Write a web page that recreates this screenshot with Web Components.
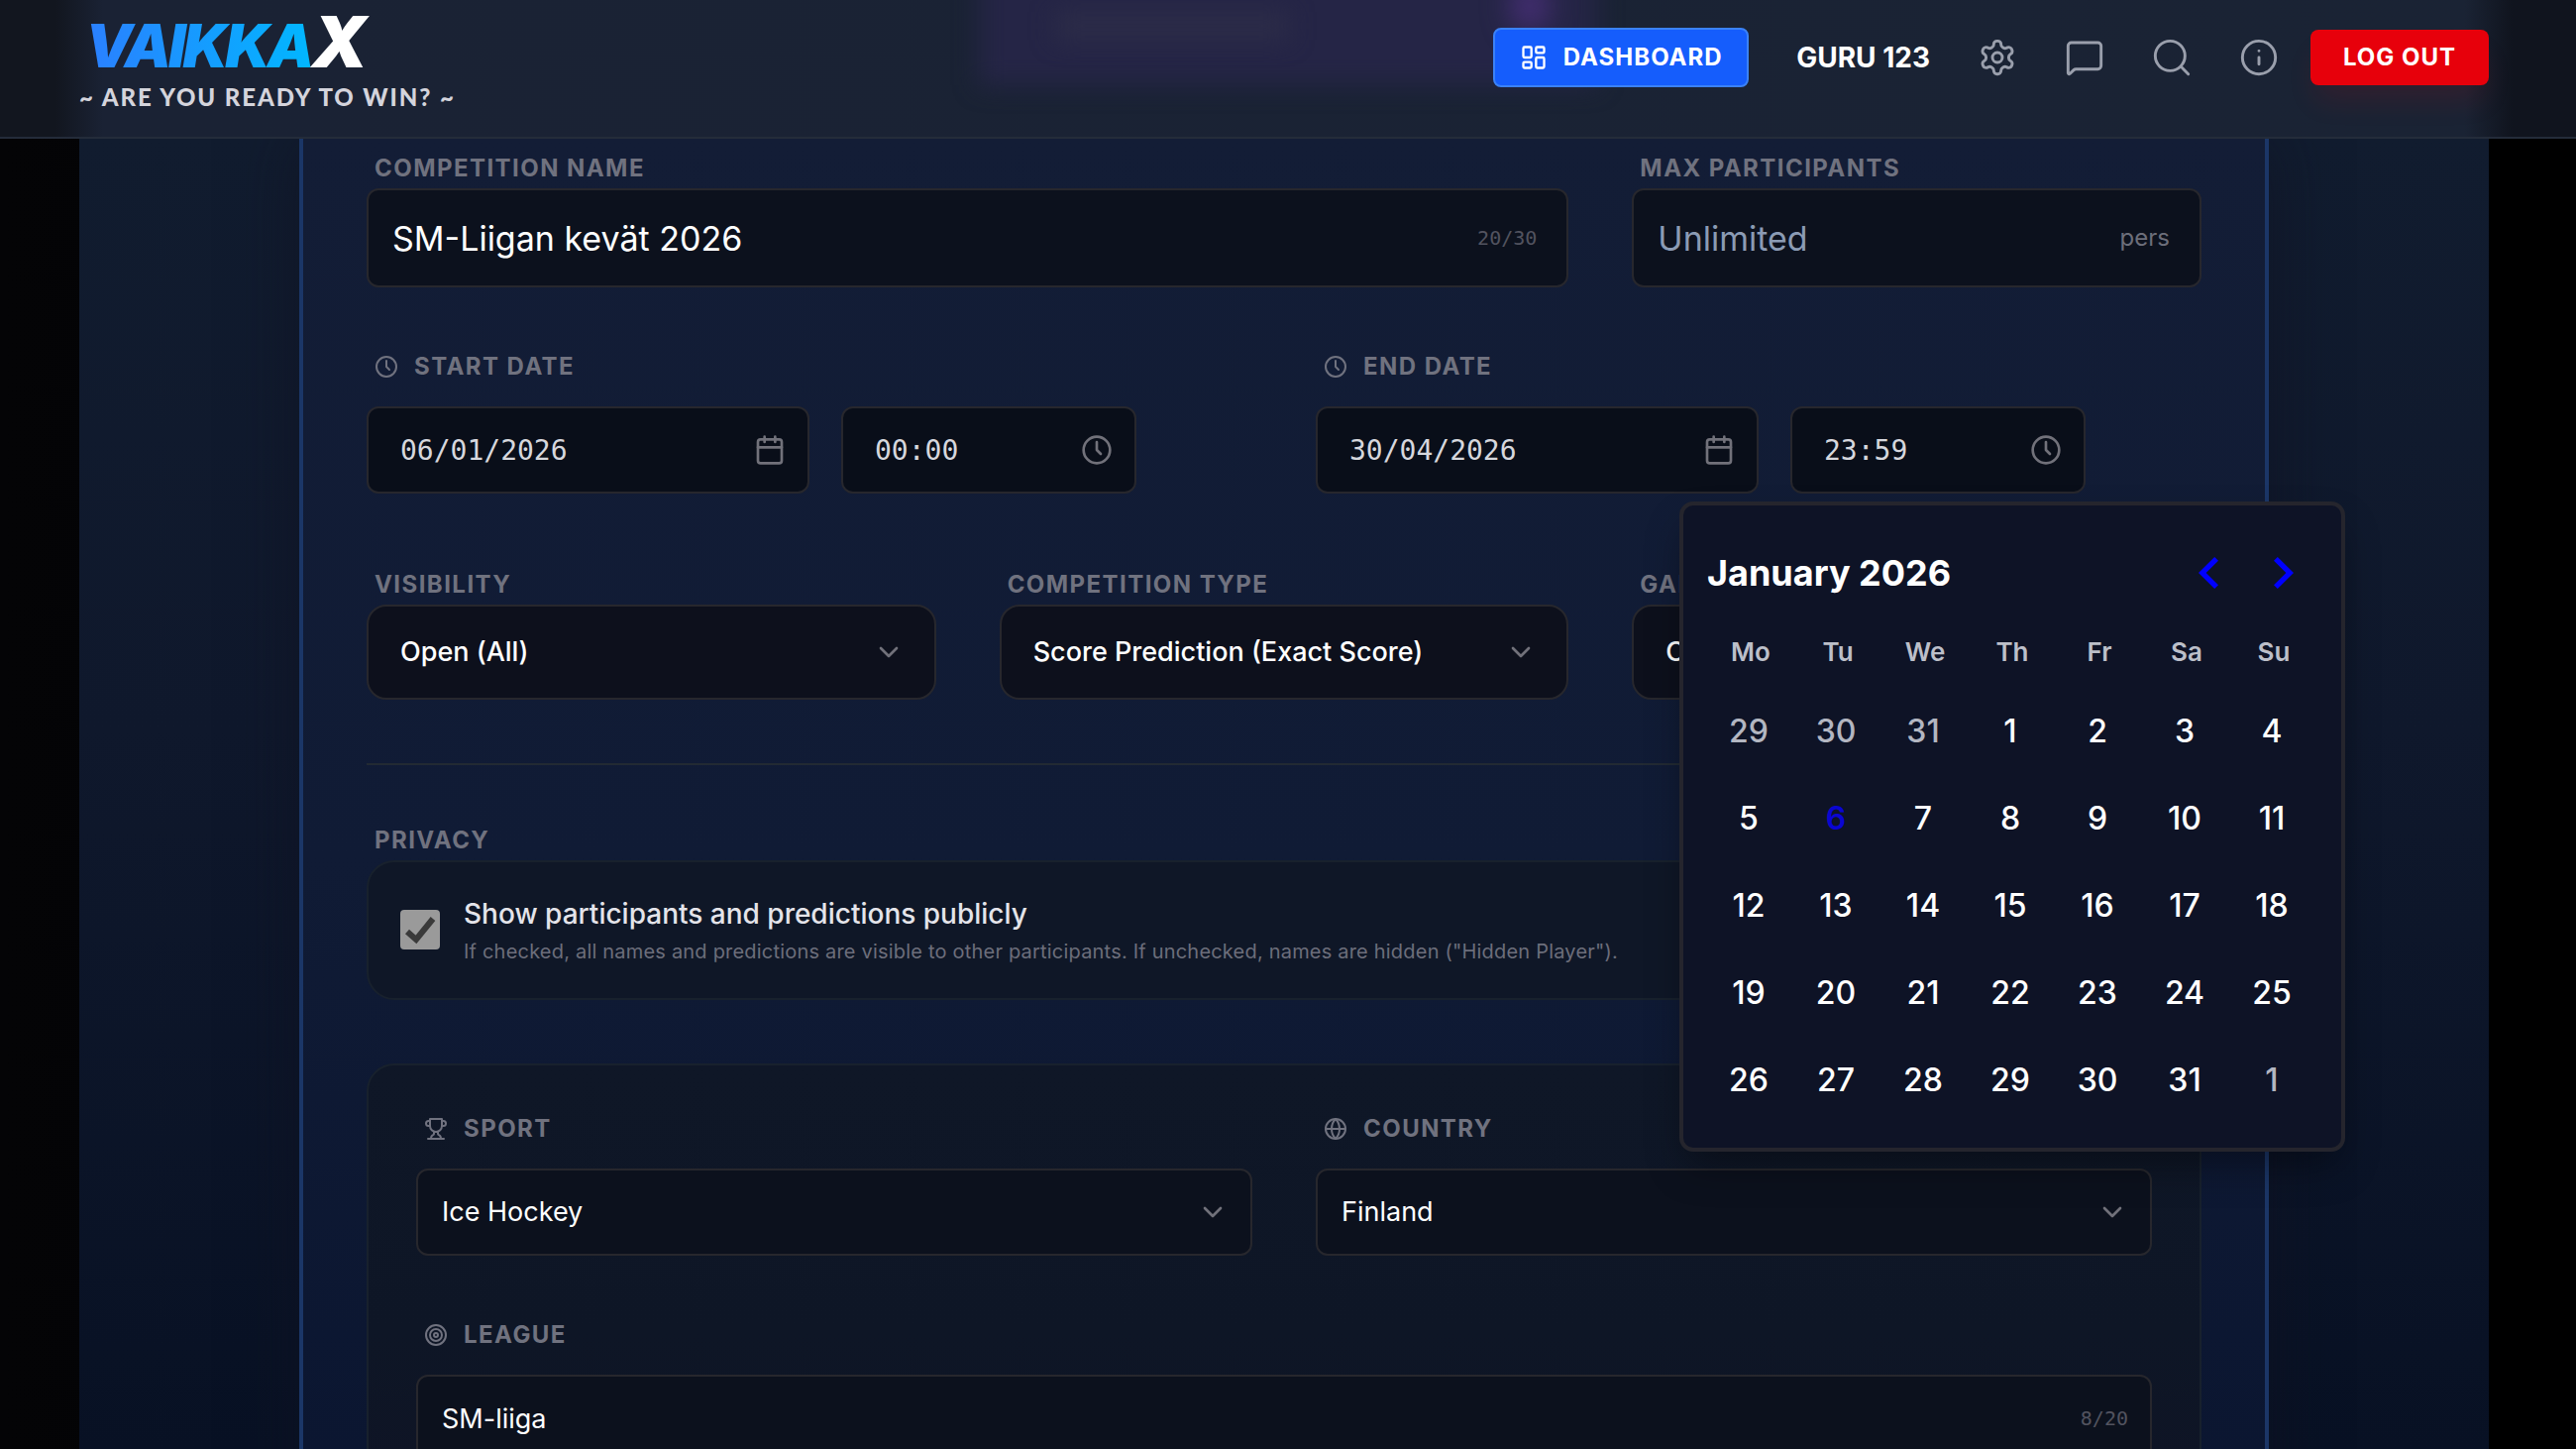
<!DOCTYPE html>
<html lang="en">
<head>
<meta charset="utf-8">
<title>VaikkaX – Create competition</title>
<style>
  html, body { margin: 0; height: 100%; }
  body {
    background: linear-gradient(90deg, #040406, #000 50%);
    color: #fff;
    font-family: Inter, "Liberation Sans", sans-serif;
    overflow: hidden;
    --label: #70727f;
    --line: #27272d;
    --well: #0c111d;
    --mono: "DejaVu Sans Mono", "Liberation Mono", monospace;
  }
</style>
</head>
<body>
<vx-app></vx-app>
<script>
const ICONS = {
  dashboard: '<rect width="7" height="9" x="3" y="3" rx="1"/><rect width="7" height="5" x="14" y="3" rx="1"/><rect width="7" height="9" x="14" y="12" rx="1"/><rect width="7" height="5" x="3" y="16" rx="1"/>',
  settings: '<path d="M12.22 2h-.44a2 2 0 0 0-2 2v.18a2 2 0 0 1-1 1.73l-.43.25a2 2 0 0 1-2 0l-.15-.08a2 2 0 0 0-2.73.73l-.22.38a2 2 0 0 0 .73 2.73l.15.1a2 2 0 0 1 1 1.72v.51a2 2 0 0 1-1 1.74l-.15.09a2 2 0 0 0-.73 2.73l.22.38a2 2 0 0 0 2.73.73l.15-.08a2 2 0 0 1 2 0l.43.25a2 2 0 0 1 1 1.73V20a2 2 0 0 0 2 2h.44a2 2 0 0 0 2-2v-.18a2 2 0 0 1 1-1.73l.43-.25a2 2 0 0 1 2 0l.15.08a2 2 0 0 0 2.73-.73l.22-.39a2 2 0 0 0-.73-2.73l-.15-.08a2 2 0 0 1-1-1.74v-.5a2 2 0 0 1 1-1.74l.15-.09a2 2 0 0 0 .73-2.73l-.22-.38a2 2 0 0 0-2.73-.73l-.15.08a2 2 0 0 1-2 0l-.43-.25a2 2 0 0 1-1-1.73V4a2 2 0 0 0-2-2z"/><circle cx="12" cy="12" r="3"/>',
  message: '<path d="M22 17a2 2 0 0 1-2 2H6.828a2 2 0 0 0-1.414.586l-2.202 2.202A.71.71 0 0 1 2 21.286V5a2 2 0 0 1 2-2h16a2 2 0 0 1 2 2z"/>',
  search: '<circle cx="11" cy="11" r="9"/><path d="m22 22-4.400-4.400"/>',
  info: '<circle cx="12" cy="12" r="10"/><path d="M12 16v-4M12 8h.01"/>',
  clock: '<circle cx="12" cy="12" r="10"/><path d="M12 6v6l3 3"/>',
  calendar: '<path d="M8 2v4M16 2v4M3 10h18"/><rect width="18" height="18" x="3" y="4" rx="2"/>',
  chevron: '<path d="m6 9 6 6 6-6"/>',
  trophy: '<path d="M6 9H4.500a2.500 2.500 0 0 1 0-5H6M18 9h1.500a2.500 2.500 0 0 0 0-5H18M4 22h16M10 14.660V17c0 .55-.47.98-.97 1.210C7.850 18.750 7 20.240 7 22M14 14.660V17c0 .55.47.98.97 1.210C16.150 18.750 17 20.240 17 22M18 2H6v7a6 6 0 0 0 12 0V2Z"/>',
  globe: '<circle cx="12" cy="12" r="10"/><path d="M12 2a14.500 14.500 0 0 0 0 20 14.500 14.500 0 0 0 0-20M2 12h20"/>',
  target: '<circle cx="12" cy="12" r="10"/><circle cx="12" cy="12" r="6"/><circle cx="12" cy="12" r="2"/>'
};

class VxElement extends HTMLElement {
  connectedCallback() {
    if (this.shadowRoot) return;
    this.attachShadow({ mode: 'open' }).innerHTML = this.render();
  }
  a(name, fallback = '') { return this.getAttribute(name) ?? fallback; }
}

customElements.define('vx-icon', class extends VxElement {
  render() {
    const size = this.a('size', '24');
    return `<style>
      :host { display: block; flex: none; width: ${size}px; height: ${size}px; }
      svg { display: block; width: 100%; height: 100%; fill: none; stroke: currentColor; stroke-linecap: round; stroke-linejoin: round; }
    </style>
    <svg viewBox="0 0 24 24" stroke-width="${this.a('stroke', '2')}" aria-hidden="true">${ICONS[this.a('name')]}</svg>`;
  }
});

const FIELD_CSS = `
  :host { display: block; min-width: 0; }
  * { box-sizing: border-box; }
  .label { display: flex; align-items: center; gap: 16px; height: 32px; padding-left: 8px; margin-bottom: 4px;
    color: var(--label); font-size: 24px; line-height: 32px; font-weight: 700; letter-spacing: 0.06em; white-space: nowrap; }
  :host([icon]) .label { margin-bottom: 24px; }
  .well { position: relative; display: flex; align-items: center; }
  input, select { width: 100%; height: 88px; margin: 0; padding: 0 24px; border: 2px solid var(--line); border-radius: 12px;
    background: var(--well); color: #fff; font: 400 27px/40px Inter, sans-serif; outline: none; appearance: none; }
  input::placeholder { color: #8b9bb4; opacity: 1; }
  .adorn { position: absolute; right: 24px; color: #71717a; pointer-events: none; }
  .count { font: 20px/28px var(--mono); color: #52535f; }
  .unit { font-size: 24px; line-height: 32px; color: #6c6e7a; }
`;
const labelOf = el => `<label class="label" for="f">${el.a('icon') ? `<vx-icon name="${el.a('icon')}" stroke="2"></vx-icon>` : ''}${el.a('label')}</label>`;

customElements.define('vx-text-field', class extends VxElement {
  render() {
    return `<style>${FIELD_CSS}
      :host([large]) input { height: 100px; font-size: 34px; }
      :host([large]) .adorn { right: 32px; }
    </style>
    ${labelOf(this)}
    <div class="well">
      <input id="f" type="text" value="${this.a('value')}" placeholder="${this.a('placeholder')}">
      <span class="adorn ${this.hasAttribute('count') ? 'count' : 'unit'}">${this.a('count') || this.a('unit')}</span>
    </div>`;
  }
});

customElements.define('vx-select-field', class extends VxElement {
  render() {
    return `<style>${FIELD_CSS}
      :host([roomy]) select { height: 96px; padding: 0 32px; border-radius: 20px; font-weight: 500; background: #0d101c; }
      :host([roomy]) .adorn { right: 32px; }
    </style>
    ${labelOf(this)}
    <div class="well">
      <select id="f"><option>${this.a('value')}</option></select>
      <vx-icon class="adorn" name="chevron" size="32"></vx-icon>
    </div>`;
  }
});

customElements.define('vx-datetime-field', class extends VxElement {
  render() {
    return `<style>${FIELD_CSS}
      .row { position: relative; display: flex; gap: 32px; }
      .date { width: 50%; }
      .time { width: calc(100% / 3); }
      input { padding: 0 34px 0 32px; background: #090e19; color: #d6d7dd; font-family: var(--mono); font-size: 28px; }
      ::slotted(*) { position: absolute; z-index: 5; top: calc(100% + 8px); right: -145px; }
    </style>
    ${labelOf(this)}
    <div class="row">
      <div class="well date"><input id="f" type="text" value="${this.a('date')}"><vx-icon class="adorn" name="calendar" size="32"></vx-icon></div>
      <div class="well time"><input type="text" aria-label="${this.a('label')} time" value="${this.a('time')}"><vx-icon class="adorn" name="clock" size="32"></vx-icon></div>
      <slot></slot>
    </div>`;
  }
});

customElements.define('vx-calendar', class extends VxElement {
  render() {
    const days = [29, 30, 31, ...Array.from({ length: 31 }, (_, i) => i + 1), 1];
    let rows = '';
    for (let r = 0; r < 5; r++) {
      rows += '<tr>' + days.slice(r * 7, r * 7 + 7).map((d, c) => {
        const i = r * 7 + c;
        const cls = i < 3 || i > 33 ? 'out' : d === 6 ? 'today' : '';
        return `<td><button class="${cls}">${d}</button></td>`;
      }).join('') + '</tr>';
    }
    return `<style>
      :host { display: block; }
      * { box-sizing: border-box; }
      .pop { padding: 24px; border: 4px solid #25252d; border-radius: 14px; background: #0e1326; box-shadow: 0 20px 40px -8px rgba(0,0,0,.4); }
      .head { display: flex; align-items: center; height: 88px; }
      h2 { flex: 1; margin: 0; font-size: 36px; line-height: 48px; font-weight: 700; }
      button { display: flex; align-items: center; justify-content: center; padding: 0; border: 0; background: none; font: inherit; color: inherit; }
      .nav { width: 72px; height: 72px; }
      .nav svg { width: 48px; height: 48px; fill: #00f; }
      table { border-collapse: collapse; }
      th { width: 88px; height: 72px; padding: 0; font-size: 26px; line-height: 32px; font-weight: 600; color: #bcbfc9; }
      td { width: 88px; height: 88px; padding: 0; font-size: 32px; line-height: 40px; font-weight: 500; }
      td button { width: 84px; height: 84px; }
      .out { color: #b3b6c1; }
      .today { color: #0a05d2; font-weight: 600; }
    </style>
    <div class="pop" role="dialog" aria-label="Choose date">
      <div class="head"><h2>January 2026</h2>
        <button class="nav" aria-label="Previous month"><svg viewBox="0 0 24 24"><polygon points="16 18.112 9.811 12 16 5.877 14.089 4 6 12 14.089 20"/></svg></button>
        <button class="nav" aria-label="Next month"><svg viewBox="0 0 24 24"><polygon points="8 18.112 14.189 12 8 5.877 9.911 4 18 12 9.911 20"/></svg></button>
      </div>
      <table>
        <thead><tr>${['Mo', 'Tu', 'We', 'Th', 'Fr', 'Sa', 'Su'].map(d => `<th scope="col">${d}</th>`).join('')}</tr></thead>
        <tbody>${rows}</tbody>
      </table>
    </div>`;
  }
});

customElements.define('vx-privacy', class extends VxElement {
  render() {
    return `<style>${FIELD_CSS}
      .box { display: flex; align-items: center; gap: 24px; padding: 32px 32px 33px; border: 2px solid #18212d; border-radius: 28px; background: #0f1727; }
      .tick { position: relative; flex: none; width: 40px; height: 40px; }
      .tick input { display: block; width: 40px; height: 40px; padding: 0; border: 0; border-radius: 4px; background: #9a9a9a; }
      .tick svg { position: absolute; inset: 0; fill: none; stroke: #3a3a3a; stroke-width: 6; pointer-events: none; }
      .text { display: flex; flex-direction: column; gap: 4px; }
      .title { font-size: 28px; line-height: 40px; font-weight: 500; color: #e4e4ea; }
      .desc { font-size: 20px; line-height: 28px; letter-spacing: 0.01em; color: #6c6e7b; }
    </style>
    <div class="label">PRIVACY</div>
    <div class="box">
      <span class="tick"><input id="f" type="checkbox" checked><svg viewBox="0 0 40 40"><path d="M7 22l9 8L33 9"/></svg></span>
      <label class="text" for="f"><span class="title">Show participants and predictions publicly</span>
      <span class="desc">If checked, all names and predictions are visible to other participants. If unchecked, names are hidden ("Hidden Player").</span></label>
    </div>`;
  }
});

customElements.define('vx-panel', class extends VxElement {
  render() {
    return `<style>
      :host { display: grid; grid-template-columns: 1fr 1fr; gap: 64px; padding: 48px; border: 2px solid #18212d; border-radius: 28px;
        background: linear-gradient(#0f1727, #0e1626 60%, #0f1425); }
      ::slotted([wide]) { grid-column: 1 / -1; }
    </style><slot></slot>`;
  }
});

customElements.define('vx-header', class extends VxElement {
  render() {
    return `<style>
      :host { display: block; flex: none; position: relative; z-index: 10; }
      * { box-sizing: border-box; }
      header { position: relative; display: flex; justify-content: space-between; align-items: flex-start; height: 140px; padding: 0 88px 0 80px;
        border-bottom: 2px solid #242c3a;
        background: linear-gradient(90deg, #12161f 56px, #1a2234 104px, #1a2334 calc(100% - 112px), #10141e calc(100% - 64px)); }
      .glow { position: absolute; top: -60px; left: 38%; width: 24%; height: 146px; background: #252546; filter: blur(12px); }
      .streak { position: absolute; top: 12px; left: 41%; width: 9%; height: 28px; background: #2c2c48; filter: blur(12px); }
      .spot { position: absolute; top: -20px; right: 1036px; width: 40px; height: 52px; border-radius: 50%; background: #442e72; filter: blur(14px); }
      .brand { position: relative; display: flex; flex-direction: column; color: #fff; text-decoration: none; }
      .logo { display: flex; align-items: baseline; height: 80px; padding-left: 6px; font-size: 60px; line-height: 84px; font-weight: 900; font-style: italic; letter-spacing: -3px; }
      .logo .a { padding-right: 6px; margin-right: -6px; background: linear-gradient(90deg, #2b7fff, #00b8ff); background-clip: text; color: transparent; }
      .logo .x { font-size: 72px; }
      .tag { font: 900 24px/32px Lato, Inter, sans-serif; letter-spacing: 0.08em; color: #d4d4dc; margin-top: 2px; }
      nav { position: relative; display: flex; align-items: center; height: 116px; }
      button { display: flex; align-items: center; justify-content: center; padding: 0; border: 0; background: none; font: 700 24px/32px Inter, sans-serif; color: inherit; white-space: nowrap; }
      .dash { display: flex; align-items: center; justify-content: center; gap: 16px; min-width: 258px; height: 60px; padding: 0 24px; border: 2px solid #3b82f6; border-radius: 8px; background: #155dfc; font: 700 24px/32px Inter, sans-serif; letter-spacing: 1px; color: #fff; text-decoration: none; }
      .user { padding: 0 48px; font-size: 28px; line-height: 40px; font-weight: 700; }
      .icons { display: flex; gap: 48px; color: #9a9fac; }
      .out { min-width: 180px; height: 56px; margin-left: 32px; padding: 0 32px; border-radius: 8px; background: #e7000b; color: #fff; letter-spacing: 1px; box-shadow: 0 20px 30px -6px rgba(231,0,11,.12); }
    </style>
    <header>
      <div class="glow"></div><div class="streak"></div><div class="spot"></div>
      <a class="brand" href="#"><span class="logo"><span class="a">VAIKKA</span><span class="x">X</span></span><span class="tag">~ ARE YOU READY TO WIN? ~</span></a>
      <nav>
        <a class="dash" href="#"><vx-icon name="dashboard" size="28"></vx-icon>DASHBOARD</a>
        <span class="user">GURU 123</span>
        <span class="icons">
          <button aria-label="Settings"><vx-icon name="settings" size="40" stroke="1.75"></vx-icon></button>
          <button aria-label="Messages"><vx-icon name="message" size="40" stroke="1.75"></vx-icon></button>
          <button aria-label="Search"><vx-icon name="search" size="40" stroke="1.75"></vx-icon></button>
          <button aria-label="Info"><vx-icon name="info" size="40" stroke="1.75"></vx-icon></button>
        </span>
        <button class="out">LOG OUT</button>
      </nav>
    </header>`;
  }
});

customElements.define('vx-app', class extends VxElement {
  render() {
    return `<style>
      :host { display: flex; flex-direction: column; height: 100vh; overflow: hidden; }
      * { box-sizing: border-box; }
      main { flex: 1; min-height: 0; margin: 0 88px 0 80px; padding: 0 222px; overflow: visible;
        background: linear-gradient(#111c2f, #0f182c 45%, #081124); }
      .card { display: flex; flex-direction: column; gap: 64px; padding: 14px 64px 64px; border: solid #1b3667; border-width: 0 4px;
        background: linear-gradient(#131d36, #101b35 50%, #0a1530); box-shadow: 0 0 60px rgba(16,18,34,.6); }
      .three { display: grid; grid-template-columns: repeat(3, 1fr); gap: 64px; }
      .two { display: grid; grid-template-columns: 1fr 1fr; gap: 64px; padding-bottom: 12px; }
      .span2 { grid-column: span 2; }
      .ruled { padding-top: 60px; border-top: 2px solid #222a33; }
    </style>
    <vx-header></vx-header>
    <main>
      <form class="card" onsubmit="return false">
        <div class="three">
          <vx-text-field class="span2" large label="COMPETITION NAME" value="SM-Liigan kevät 2026" count="20/30"></vx-text-field>
          <vx-text-field large label="MAX PARTICIPANTS" placeholder="Unlimited" unit="pers"></vx-text-field>
        </div>
        <div class="two">
          <vx-datetime-field icon="clock" label="START DATE" date="06/01/2026" time="00:00"></vx-datetime-field>
          <vx-datetime-field icon="clock" label="END DATE" date="30/04/2026" time="23:59"><vx-calendar></vx-calendar></vx-datetime-field>
        </div>
        <div class="three">
          <vx-select-field roomy label="VISIBILITY" value="Open (All)"></vx-select-field>
          <vx-select-field roomy label="COMPETITION TYPE" value="Score Prediction (Exact Score)"></vx-select-field>
          <vx-select-field roomy label="GAME" value="Classic"></vx-select-field>
        </div>
        <div class="ruled"><vx-privacy></vx-privacy></div>
        <vx-panel>
          <vx-select-field icon="trophy" label="SPORT" value="Ice Hockey"></vx-select-field>
          <vx-select-field icon="globe" label="COUNTRY" value="Finland"></vx-select-field>
          <vx-text-field wide icon="target" label="LEAGUE" value="SM-liiga" count="8/20"></vx-text-field>
        </vx-panel>
      </form>
    </main>`;
  }
});
</script>
</body>
</html>
